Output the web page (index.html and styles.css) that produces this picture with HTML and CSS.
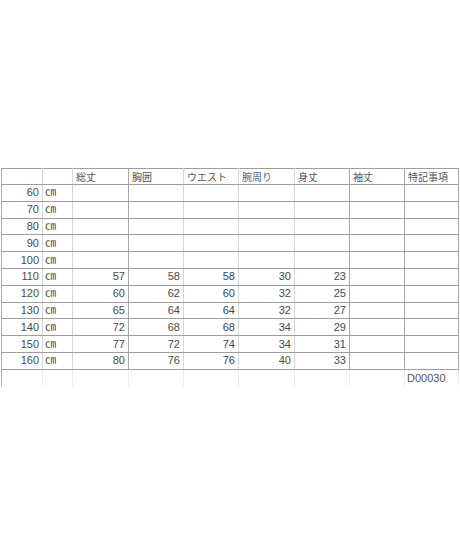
FILE: index.html
```html
<!DOCTYPE html>
<html lang="ja">
<head>
<meta charset="utf-8">
<link rel="stylesheet" href="styles.css">
</head>
<body>
<div class="page">
<table class="sheet">
<colgroup>
<col class="c0"><col class="c1"><col class="c2"><col class="c3"><col class="c4"><col class="c5"><col class="c6"><col class="c7"><col class="c8">
</colgroup>
<tr class="head">
<td class="lt"></td><td class="lt"></td><td>総丈</td><td class="lt">胸囲</td><td class="lt">ウエスト</td><td class="lt blue">腕周り</td><td>身丈</td><td>袖丈</td><td class="rb">特記事項</td>
</tr>
<tr><td class="num lt">60</td><td class="unit lt">㎝</td><td></td><td class="lt"></td><td class="lt"></td><td class="lt"></td><td></td><td></td><td class="rb"></td></tr>
<tr><td class="num lt">70</td><td class="unit lt">㎝</td><td></td><td class="lt"></td><td class="lt"></td><td class="lt"></td><td></td><td></td><td class="rb"></td></tr>
<tr><td class="num lt">80</td><td class="unit lt">㎝</td><td></td><td class="lt"></td><td class="lt"></td><td class="lt"></td><td></td><td></td><td class="rb"></td></tr>
<tr><td class="num lt">90</td><td class="unit lt">㎝</td><td></td><td class="lt"></td><td class="lt"></td><td class="lt"></td><td></td><td></td><td class="rb"></td></tr>
<tr><td class="num lt">100</td><td class="unit lt">㎝</td><td></td><td class="lt"></td><td class="lt"></td><td class="lt"></td><td></td><td></td><td class="rb"></td></tr>
<tr><td class="num lt">110</td><td class="unit lt">㎝</td><td class="num">57</td><td class="num lt">58</td><td class="num lt bluenum">58</td><td class="num lt">30</td><td class="num">23</td><td></td><td class="rb"></td></tr>
<tr><td class="num lt">120</td><td class="unit lt">㎝</td><td class="num">60</td><td class="num lt">62</td><td class="num lt bluenum">60</td><td class="num lt">32</td><td class="num">25</td><td></td><td class="rb"></td></tr>
<tr><td class="num lt">130</td><td class="unit lt">㎝</td><td class="num">65</td><td class="num lt">64</td><td class="num lt bluenum">64</td><td class="num lt">32</td><td class="num">27</td><td></td><td class="rb"></td></tr>
<tr><td class="num lt">140</td><td class="unit lt">㎝</td><td class="num">72</td><td class="num lt">68</td><td class="num lt bluenum">68</td><td class="num lt">34</td><td class="num">29</td><td></td><td class="rb"></td></tr>
<tr><td class="num lt">150</td><td class="unit lt">㎝</td><td class="num">77</td><td class="num lt">72</td><td class="num lt bluenum">74</td><td class="num lt">34</td><td class="num">31</td><td></td><td class="rb"></td></tr>
<tr><td class="num lt">160</td><td class="unit lt">㎝</td><td class="num">80</td><td class="num lt">76</td><td class="num lt bluenum">76</td><td class="num lt">40</td><td class="num">33</td><td></td><td class="rb"></td></tr>
<tr class="foot"><td></td><td></td><td></td><td></td><td></td><td></td><td></td><td></td><td class="code">D00030</td></tr>
</table>
</div>
</body>
</html>
```

FILE: styles.css
```css
html, body {
  margin: 0;
  padding: 0;
  background: #ffffff;
}
.page {
  padding-top: 168px;
  padding-left: 1px;
}
.sheet {
  border-collapse: collapse;
  table-layout: fixed;
  width: 458px;
  font-family: "Liberation Sans", "Noto Sans CJK JP", sans-serif;
  font-size: 11px;
  color: #4a4a4a;
}
.c0 { width: 41px; }
.c1 { width: 30px; }
.c2 { width: 56px; }
.c3 { width: 55px; }
.c4 { width: 55px; }
.c5 { width: 56px; }
.c6 { width: 55px; }
.c7 { width: 55px; }
.c8 { width: 54px; }
.sheet td {
  height: 15.8px;
  padding: 0 3px;
  border-top: 1px solid #9e9e9e;
  border-bottom: 1px solid #9e9e9e;
  border-left: 1px solid #a8a8a8;
  border-right: 1px solid #a8a8a8;
  white-space: nowrap;
  overflow: hidden;
  line-height: 15px;
  vertical-align: middle;
}
.sheet td.lt {
  border-right-color: #d6d6d6;
}
.sheet tr td:first-child {
  border-left-color: #b0b0b0;
}
.sheet td.lt + td.lt,
.sheet td.lt + td {
  border-left-color: #d6d6d6;
}
.head td {
  height: 14px;
  font-family: "Noto Sans CJK JP", sans-serif;
  font-size: 10px;
  color: #555555;
  text-align: left;
  padding-left: 3px;
}
.head td.blue {
  color: #4c6a98;
}
.num {
  text-align: right;
}
.unit {
  text-align: left;
  padding-left: 2px !important;
}
.bluenum {
  color: #34466e;
}
.foot td {
  height: 15px;
  border-top: 1px solid #9e9e9e;
  border-bottom: none;
  border-left: 1px solid #ececec;
  border-right: 1px solid #ececec;
}
.foot td.code {
  border-left-color: #ececec;
  font-size: 11px;
  color: #555555;
  padding-left: 2px;
  line-height: 16px;
}
```
